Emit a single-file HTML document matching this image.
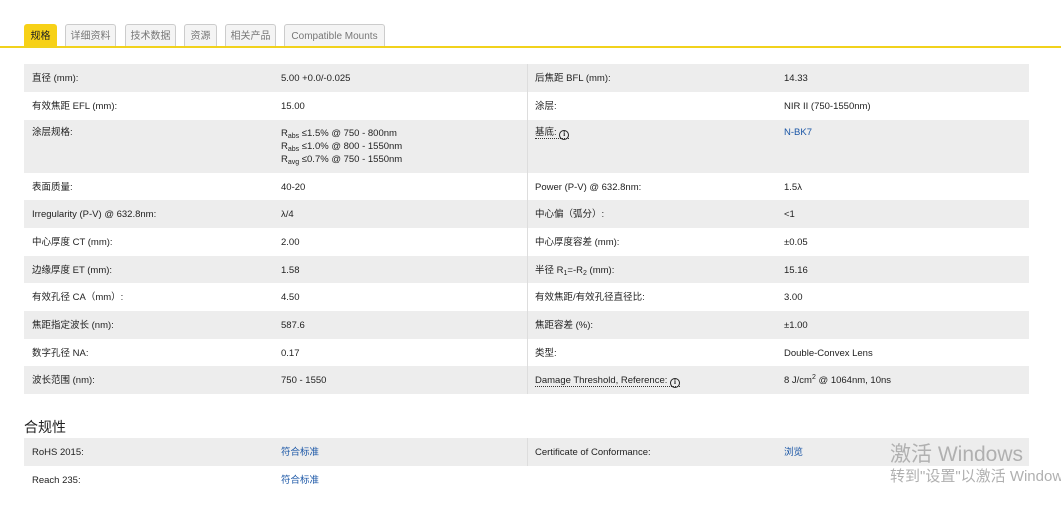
<!DOCTYPE html>
<html><head><meta charset="utf-8"><style>
*{margin:0;padding:0;box-sizing:border-box}
body{width:1061px;height:509px;background:#fff;font-family:"Liberation Sans","Noto Sans CJK SC",sans-serif;font-size:9.5px;color:#222;position:relative;overflow:hidden}
.line{position:absolute;left:0;top:46px;width:1061px;height:2px;background:#f1d21c}
.tab{position:absolute;top:24px;height:23px;border:1px solid #ccc;border-bottom:none;background:#f4f4f4;border-radius:3px 3px 0 0;color:#777;font-size:10px;line-height:23px;text-align:center}
.tab.on{background:#f7d117;border-color:#f7d117;color:#222}
.row{position:absolute;left:24px;width:1005px}
.row.g{background:#ededed}
.c{position:absolute;top:9px;line-height:12px}
.div{position:absolute;left:527px;width:1px;background:#ddd}
a{color:#1a56a6;text-decoration:none}
sub{font-size:7px;vertical-align:-2px;line-height:0}
sup{font-size:7px;vertical-align:4px;line-height:0}
.i{display:inline-block;width:10px;height:10px;border:1.4px solid #222;border-radius:50%;font-size:7px;line-height:7px;text-align:center;font-weight:bold;vertical-align:-1px;font-family:"Liberation Serif",serif}
.dot{border-bottom:1px dotted #333}
h3{position:absolute;left:24px;top:417px;font-size:14px;font-weight:normal;color:#222}
.wm{position:absolute;color:#b0b0b0;white-space:nowrap}
</style></head><body>
<div class="tab on" style="left:24px;width:33px">规格</div>
<div class="tab" style="left:65px;width:51px">详细资料</div>
<div class="tab" style="left:125px;width:51px">技术数据</div>
<div class="tab" style="left:184px;width:33px">资源</div>
<div class="tab" style="left:225px;width:51px">相关产品</div>
<div class="tab" style="left:284px;width:101px">Compatible Mounts</div>
<div class="line"></div>

<div class="row g" style="top:64px;height:28px"><span class="c" style="left:8px">直径 (mm):</span><span class="c" style="left:257px">5.00 +0.0/-0.025</span><span class="c" style="left:511px">后焦距 BFL (mm):</span><span class="c" style="left:760px">14.33</span></div>
<div class="row" style="top:92px;height:28px"><span class="c" style="left:8px">有效焦距 EFL (mm):</span><span class="c" style="left:257px">15.00</span><span class="c" style="left:511px">涂层:</span><span class="c" style="left:760px">NIR II (750-1550nm)</span></div>
<div class="row g" style="top:120px;height:53px"><span class="c" style="left:8px;top:7px">涂层规格:</span><span class="c" style="left:257px;top:7px;line-height:13px">R<sub>abs</sub> ≤1.5% @ 750 - 800nm<br>R<sub>abs</sub> ≤1.0% @ 800 - 1550nm<br>R<sub>avg</sub> ≤0.7% @ 750 - 1550nm</span><span class="c" style="left:511px;top:7px"><span class="dot">基底: <span class="i">i</span></span></span><span class="c" style="left:760px;top:7px"><a>N-BK7</a></span></div>
<div class="row" style="top:173px;height:27px"><span class="c" style="left:8px">表面质量:</span><span class="c" style="left:257px">40-20</span><span class="c" style="left:511px">Power (P-V) @ 632.8nm:</span><span class="c" style="left:760px">1.5λ</span></div>
<div class="row g" style="top:200px;height:28px"><span class="c" style="left:8px">Irregularity (P-V) @ 632.8nm:</span><span class="c" style="left:257px">λ/4</span><span class="c" style="left:511px">中心偏（弧分）:</span><span class="c" style="left:760px">&lt;1</span></div>
<div class="row" style="top:228px;height:28px"><span class="c" style="left:8px">中心厚度 CT (mm):</span><span class="c" style="left:257px">2.00</span><span class="c" style="left:511px">中心厚度容差 (mm):</span><span class="c" style="left:760px">±0.05</span></div>
<div class="row g" style="top:256px;height:27px"><span class="c" style="left:8px">边缘厚度 ET (mm):</span><span class="c" style="left:257px">1.58</span><span class="c" style="left:511px">半径 R<sub>1</sub>=-R<sub>2</sub> (mm):</span><span class="c" style="left:760px">15.16</span></div>
<div class="row" style="top:283px;height:28px"><span class="c" style="left:8px">有效孔径 CA（mm）:</span><span class="c" style="left:257px">4.50</span><span class="c" style="left:511px">有效焦距/有效孔径直径比:</span><span class="c" style="left:760px">3.00</span></div>
<div class="row g" style="top:311px;height:28px"><span class="c" style="left:8px">焦距指定波长 (nm):</span><span class="c" style="left:257px">587.6</span><span class="c" style="left:511px">焦距容差 (%):</span><span class="c" style="left:760px">±1.00</span></div>
<div class="row" style="top:339px;height:27px"><span class="c" style="left:8px">数字孔径 NA:</span><span class="c" style="left:257px">0.17</span><span class="c" style="left:511px">类型:</span><span class="c" style="left:760px">Double-Convex Lens</span></div>
<div class="row g" style="top:366px;height:28px"><span class="c" style="left:8px">波长范围 (nm):</span><span class="c" style="left:257px">750 - 1550</span><span class="c" style="left:511px"><span class="dot">Damage Threshold, Reference: <span class="i">i</span></span></span><span class="c" style="left:760px">8 J/cm<sup>2</sup> @ 1064nm, 10ns</span></div>
<div class="div" style="top:64px;height:330px"></div>

<h3>合规性</h3>
<div class="row g" style="top:438px;height:28px"><span class="c" style="left:8px">RoHS 2015:</span><span class="c" style="left:257px"><a>符合标准</a></span><span class="c" style="left:511px">Certificate of Conformance:</span><span class="c" style="left:760px"><a>浏览</a></span></div>
<div class="row" style="top:466px;height:27px"><span class="c" style="left:8px">Reach 235:</span><span class="c" style="left:257px"><a>符合标准</a></span></div>
<div class="div" style="top:438px;height:28px"></div>
<div class="wm" style="left:890px;top:438px;font-size:21px">激活 Windows</div>
<div class="wm" style="left:890px;top:465px;font-size:15px">转到"设置"以激活 Windows。</div>
</body></html>
